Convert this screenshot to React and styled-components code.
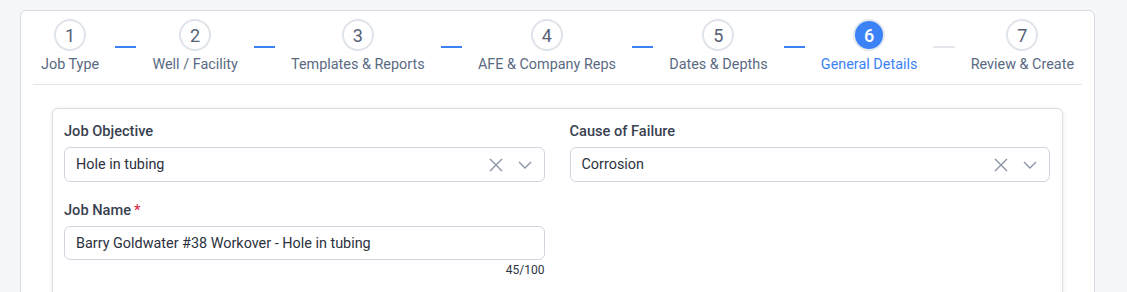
import React from "react";
import styled, { createGlobalStyle } from "styled-components";

const GlobalStyle = createGlobalStyle`
  html, body {
    margin: 0;
    background: #f6f7f9;
    font-family: Roboto, "Liberation Sans", Arial, sans-serif;
    overflow: hidden;
  }
`;

const Page = styled.div`
  padding: 10px 32px 0 20px;
  height: 292px;
  box-sizing: border-box;
`;

const Card = styled.div`
  background: #fff;
  border: 1px solid #d6dae1;
  border-radius: 6px;
  padding: 0 12px;
  min-height: 400px;
`;

const Stepper = styled.div`
  display: flex;
  align-items: flex-start;
  padding: 8px 0 9px;
  border-bottom: 1px solid #e3e7ed;
`;

const Step = styled.div`
  display: flex;
  flex-direction: column;
  align-items: center;
  padding: 0 8px;
  white-space: nowrap;
`;

const Circle = styled.div`
  width: 28px;
  height: 28px;
  border-radius: 50%;
  border: 2px solid ${(p) => (p.active ? "#e4e8ef" : "#dfe3ea")};
  background: ${(p) => (p.active ? "#3b82f6" : "#fff")};
  color: ${(p) => (p.active ? "#fff" : "#566176")};
  font-size: 18px;
  font-weight: ${(p) => (p.active ? 500 : 400)};
  display: flex;
  align-items: center;
  justify-content: center;
`;

const StepLabel = styled.div`
  margin-top: 4px;
  font-size: 14.4px;
  line-height: 20px;
  color: ${(p) => (p.active ? "#3b82f6" : "#5a6a82")};
`;

const Connector = styled.div`
  flex: 1;
  height: 2px;
  margin: 27px 8px 0;
  background: ${(p) => (p.done ? "#3b82f6" : "#e3e7ed")};
`;

const Body = styled.div`
  padding: 23px 19px 0;
`;

const FormCard = styled.div`
  border: 1px solid #dcdfe5;
  border-radius: 6px;
  box-shadow: 0 1px 4px rgba(30, 40, 60, 0.12);
  padding: 12px 12px 12px 11px;
  min-height: 300px;
`;

const Grid = styled.div`
  display: grid;
  grid-template-columns: 1fr 1fr;
  column-gap: 25px;
  row-gap: 18px;
`;

const Field = styled.div`
  display: flex;
  flex-direction: column;
`;

const Label = styled.label`
  font-size: 14.6px;
  line-height: 20px;
  font-weight: 500;
  color: #394150;
  margin-bottom: 6px;
`;

const Required = styled.span`
  color: #e0314b;
  margin-left: 3px;
`;

const Box = styled.div`
  height: ${(p) => p.h}px;
  box-sizing: border-box;
  border: 1px solid #d0d6df;
  border-radius: 6px;
  display: flex;
  align-items: center;
  padding: 0 12px 0 11px;
  font-size: 14.4px;
  color: #2c323d;
`;

const Value = styled.span`
  flex: 1;
`;

const Icons = styled.div`
  display: flex;
  align-items: center;
  gap: 14px;
  color: #8a94a5;
`;

const Counter = styled.div`
  text-align: right;
  font-size: 12px;
  line-height: 16px;
  margin-top: 2px;
  color: #2c323d;
`;

const steps = [
  "Job Type",
  "Well / Facility",
  "Templates & Reports",
  "AFE & Company Reps",
  "Dates & Depths",
  "General Details",
  "Review & Create",
];
const current = 6;

const ClearIcon = () => (
  <svg width="16" height="16" viewBox="0 0 16 16" fill="none" stroke="currentColor" strokeWidth="1.4">
    <path d="M2 2 L14 14 M14 2 L2 14" />
  </svg>
);

const ChevronIcon = () => (
  <svg width="14" height="14" viewBox="0 0 14 14" fill="none" stroke="currentColor" strokeWidth="1.4">
    <path d="M1 4 L7 10 L13 4" />
  </svg>
);

const Select = ({ value }) => (
  <Box h={35}>
    <Value>{value}</Value>
    <Icons>
      <ClearIcon />
      <ChevronIcon />
    </Icons>
  </Box>
);

const App = () => {
  return (
    <Page>
      <GlobalStyle />
      <Card>
        <Stepper>
          {steps.map((name, i) => {
            const n = i + 1;
            return (
              <React.Fragment key={name}>
                {i > 0 && <Connector done={n <= current} />}
                <Step>
                  <Circle active={n === current}>{n}</Circle>
                  <StepLabel active={n === current}>{name}</StepLabel>
                </Step>
              </React.Fragment>
            );
          })}
        </Stepper>
        <Body>
          <FormCard>
            <Grid>
              <Field>
                <Label>Job Objective</Label>
                <Select value="Hole in tubing" />
              </Field>
              <Field>
                <Label>Cause of Failure</Label>
                <Select value="Corrosion" />
              </Field>
              <Field>
                <Label>
                  Job Name<Required>*</Required>
                </Label>
                <Box h={34}>
                  <Value>Barry Goldwater #38 Workover - Hole in tubing</Value>
                </Box>
                <Counter>45/100</Counter>
              </Field>
            </Grid>
          </FormCard>
        </Body>
      </Card>
    </Page>
  );
};

export default App;
